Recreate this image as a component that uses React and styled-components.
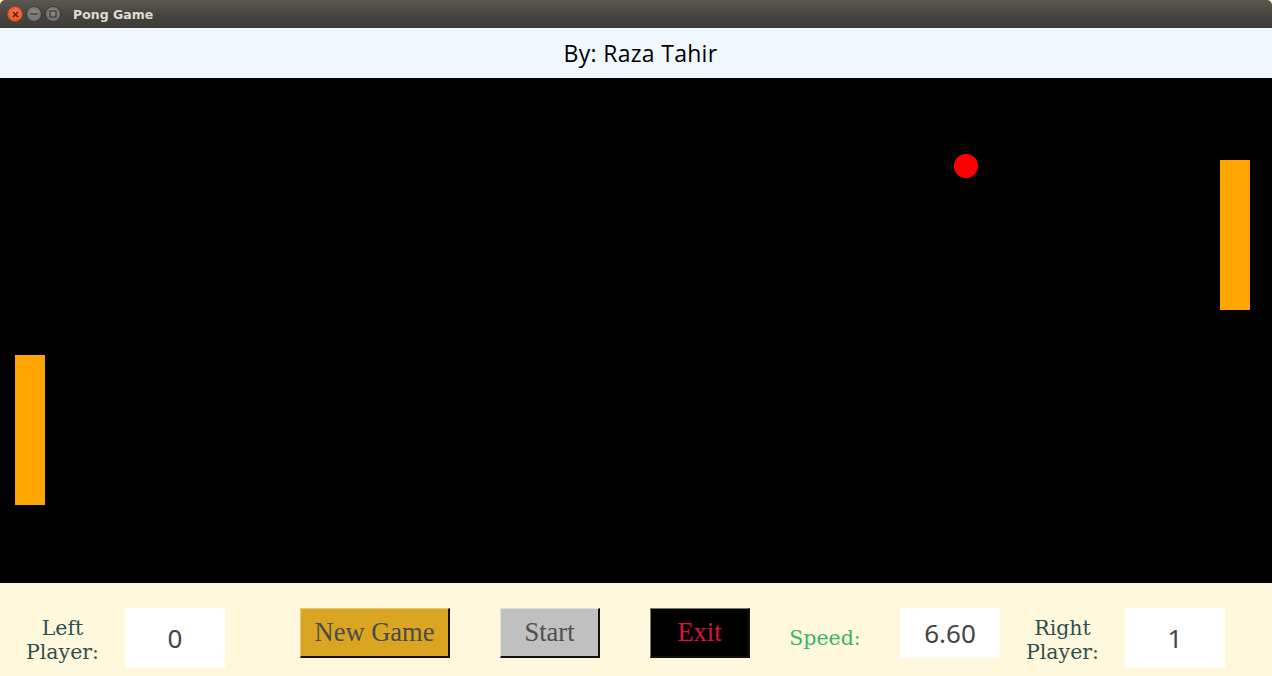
import React from "react";
import styled, { createGlobalStyle } from "styled-components";

const Global = createGlobalStyle`
  html, body { margin: 0; padding: 0; background: #000; }
  body { width: 1272px; height: 676px; overflow: hidden; }
`;

const Window = styled.div`
  width: 1272px;
  height: 676px;
  display: flex;
  flex-direction: column;
  background: #fff8dc;
`;

const TitleBar = styled.div`
  height: 28px;
  flex: none;
  display: flex;
  align-items: center;
  padding-left: 7px;
  background: linear-gradient(#5b5850, #47453f 50%, #3d3c38);
  border-radius: 5px 5px 0 0;
`;

const WinButton = styled.div`
  width: 16px;
  height: 16px;
  border-radius: 50%;
  margin-right: 3px;
  display: flex;
  align-items: center;
  justify-content: center;
  box-sizing: border-box;
  border: 1px solid ${(p) => (p.$close ? "#b5411c" : "#3d3c37")};
  background: ${(p) =>
    p.$close
      ? "radial-gradient(circle at 50% 40%, #f5784a, #e3501c)"
      : "radial-gradient(circle at 50% 40%, #8c8a84, #6a6862)"};
`;

const Title = styled.div`
  margin-left: 9px;
  font-family: "DejaVu Sans", "Noto Sans", sans-serif;
  font-weight: bold;
  font-size: 12.5px;
  color: #dfdbd2;
`;

const Header = styled.div`
  height: 50px;
  flex: none;
  box-sizing: border-box;
  padding-left: 9px;
  background: #f0f8ff;
  display: flex;
  align-items: center;
  justify-content: center;
  font-family: "Open Sans", "Noto Sans", sans-serif;
  font-size: 23px;
  letter-spacing: 0.3px;
  color: #000;
`;

const Court = styled.div`
  position: relative;
  height: 505px;
  flex: none;
  background: #000;
  overflow: hidden;
`;

const Paddle = styled.div`
  position: absolute;
  width: 30px;
  height: 150px;
  background: #ffa500;
`;

const Ball = styled.div`
  position: absolute;
  width: 24px;
  height: 24px;
  border-radius: 50%;
  background: #ff0000;
`;

const Controls = styled.div`
  flex: 1;
  display: flex;
  align-items: flex-start;
  padding-top: 25px;
  background: #fff8dc;
`;

const Label = styled.div`
  width: ${(p) => p.$w}px;
  height: 60px;
  flex: none;
  display: flex;
  align-items: center;
  justify-content: center;
  text-align: center;
  font-family: "DejaVu Serif", serif;
  font-size: 20.5px;
  line-height: 24px;
  color: ${(p) => p.$color || "#2f4f4f"};
  padding-top: ${(p) => p.$pt || 0}px;
  box-sizing: border-box;
`;

const ValueBox = styled.div`
  width: 100px;
  height: ${(p) => p.$h}px;
  flex: none;
  background: #fff;
  display: flex;
  align-items: center;
  justify-content: center;
  font-family: "Noto Sans", "Open Sans", sans-serif;
  font-size: 26px;
  color: #454545;
`;

const Button = styled.button`
  width: ${(p) => p.$w}px;
  height: 50px;
  flex: none;
  margin-left: ${(p) => p.$ml}px;
  padding: 0;
  box-sizing: border-box;
  background: ${(p) => p.$bg};
  color: ${(p) => p.$fg};
  font-family: "Liberation Serif", serif;
  font-size: 26.5px;
  border-style: solid;
  border-width: 1px 2px 2px 1px;
  border-color: ${(p) => p.$light} #111 #111 ${(p) => p.$light};
  display: flex;
  align-items: center;
  justify-content: center;
`;

export default function App() {
  return (
    <Window>
      <Global />
      <TitleBar>
        <WinButton $close>
          <svg width="7" height="7" viewBox="0 0 7 7">
            <path d="M1 1L6 6M6 1L1 6" stroke="#4a1a08" strokeWidth="1.3" />
          </svg>
        </WinButton>
        <WinButton>
          <svg width="8" height="8" viewBox="0 0 8 8">
            <path d="M0.5 4H7.5" stroke="#3a3935" strokeWidth="1.3" />
          </svg>
        </WinButton>
        <WinButton>
          <svg width="8" height="8" viewBox="0 0 8 8">
            <rect x="1" y="1" width="6" height="6" fill="none" stroke="#3a3935" strokeWidth="1.2" />
          </svg>
        </WinButton>
        <Title>Pong Game</Title>
      </TitleBar>
      <Header>By: Raza Tahir</Header>
      <Court>
        <Paddle style={{ left: 15, top: 277 }} />
        <Paddle style={{ left: 1220, top: 82 }} />
        <Ball style={{ left: 954, top: 76 }} />
      </Court>
      <Controls>
        <Label $w={125} $pt={3}>
          Left
          <br />
          Player:
        </Label>
        <ValueBox $h={60}>0</ValueBox>
        <Button $w={150} $ml={75} $bg="#daa520" $fg="#4a4a4a" $light="#e9c977">
          New Game
        </Button>
        <Button $w={100} $ml={50} $bg="#c0c0c0" $fg="#505050" $light="#e0e0e0">
          Start
        </Button>
        <Button $w={100} $ml={50} $bg="#000" $fg="#dc143c" $light="#777">
          Exit
        </Button>
        <Label $w={150} $color="#3cb371">
          Speed:
        </Label>
        <ValueBox $h={50}>6.60</ValueBox>
        <Label $w={125} $pt={3}>
          Right
          <br />
          Player:
        </Label>
        <ValueBox $h={60}>1</ValueBox>
      </Controls>
    </Window>
  );
}
